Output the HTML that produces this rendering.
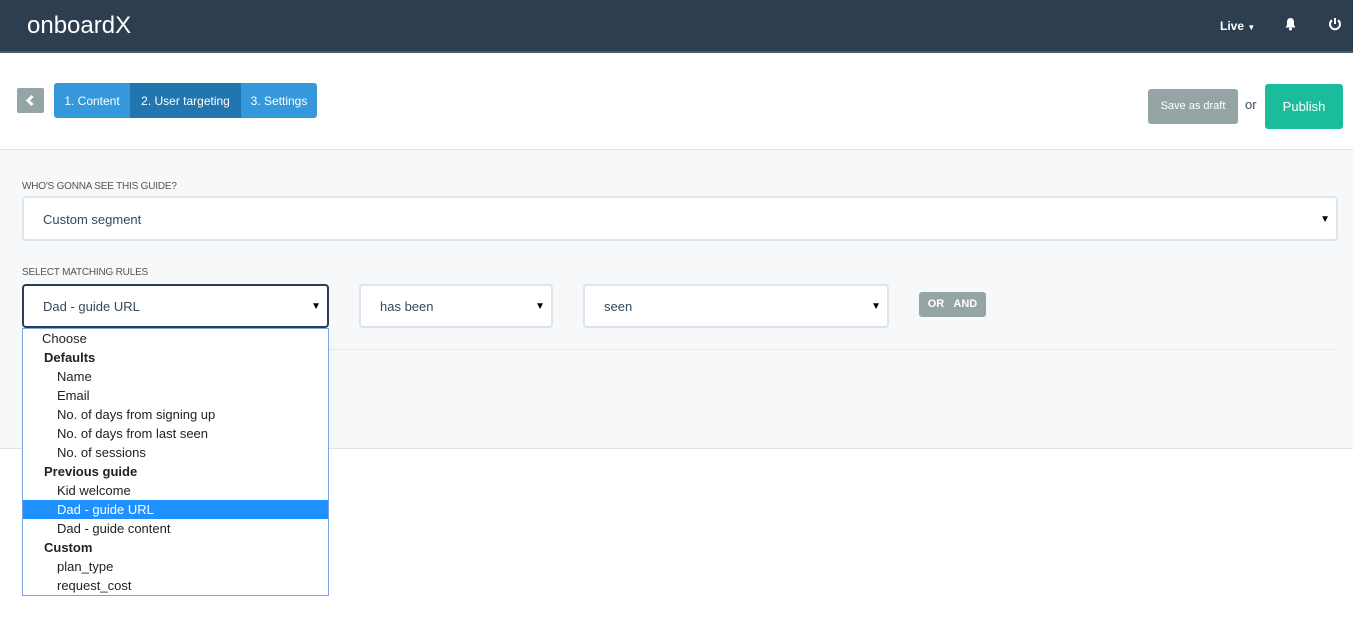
<!DOCTYPE html>
<html><head><meta charset="utf-8"><style>
*{box-sizing:border-box;margin:0;padding:0}
body{width:1353px;height:617px;background:#fff;font-family:"Liberation Sans",sans-serif;position:relative;overflow:hidden;color:#34495e}
.hdr{position:absolute;left:0;top:0;width:1353px;height:53px;background:#2c3e50;border-bottom:2px solid #4a5a6a}
.logo{position:absolute;left:27px;top:12px;color:#fff;font-size:24px}
.abs{position:absolute}
.btn{position:absolute;color:#fff;font-size:12px;text-align:center}
.panel{position:absolute;left:0;top:149px;width:1353px;height:300px;background:#f7f8fa;border-top:1px solid #dfe3e8;border-bottom:1px solid #dfe3e8}
.lbl{position:absolute;font-size:10px;color:#555;letter-spacing:-0.2px}
.sel{position:absolute;background:#fff;border:2px solid #dde4ec;border-radius:4px;font-size:13px;color:#34495e;padding-left:19px}
.arr{position:absolute;right:6px;font-size:10px;color:#000}
.dd{position:absolute;left:22px;top:328px;width:307px;height:268px;background:#fff;border:1px solid #7aa7e0;font-size:13px;color:#222}
.dd div{height:19px;line-height:19px;padding-left:34px}
.dd .g{font-weight:bold;padding-left:21px}
.dd .c{padding-left:19px}
.dd .h{background:#1e90ff;color:#fff}
</style></head><body>
<div class="hdr"><div class="logo">onboardX</div>
<div class="abs" style="left:1220px;top:19px;color:#fff;font-size:12px;font-weight:bold">Live <span style="font-size:8px">▼</span></div>
<svg class="abs" style="left:1284px;top:17px" width="13" height="14" viewBox="0 0 13 14"><path d="M6.5 1C4 1 3 3 3 5v3L1.5 10.5h10L10 8V5c0-2-1-4-3.5-4z" fill="#fff"/><circle cx="6.5" cy="12" r="1.5" fill="#fff"/></svg>
<svg class="abs" style="left:1328px;top:17px" width="14" height="14" viewBox="0 0 14 14"><path d="M4 3.2A5 5 0 1 0 10 3.2" fill="none" stroke="#fff" stroke-width="2"/><path d="M7 1v6" stroke="#fff" stroke-width="2"/></svg>
</div>
<div class="btn" style="left:17px;top:88px;width:27px;height:25px;background:#95a5a6;border-radius:2px"><svg width="27" height="25" viewBox="0 0 27 25"><path d="M15.5 8l-4.5 4.5 4.5 4.5" fill="none" stroke="#fff" stroke-width="3"/></svg></div>
<div class="btn" style="left:54px;top:83px;width:263px;height:35px;background:#3498db;border-radius:3px"></div>
<div class="btn" style="left:130px;top:83px;width:111px;height:35px;background:#2176b0"></div>
<div class="btn" style="left:54px;top:94px;width:76px">1. Content</div>
<div class="btn" style="left:130px;top:94px;width:111px">2. User targeting</div>
<div class="btn" style="left:241px;top:94px;width:76px">3. Settings</div>
<div class="btn" style="left:1148px;top:89px;width:90px;height:35px;background:#95a5a6;border-radius:3px;line-height:35px;font-size:11px">Save as draft</div>
<div class="abs" style="left:1245px;top:97px;font-size:13px">or</div>
<div class="btn" style="left:1265px;top:84px;width:78px;height:45px;background:#1abc9c;border-radius:3px;line-height:45px;font-size:13px">Publish</div>
<div class="panel"></div>
<div class="lbl" style="left:22px;top:181px">WHO'S GONNA SEE THIS GUIDE?</div>
<div class="sel" style="left:22px;top:196px;width:1316px;height:45px;line-height:43px">Custom segment<span class="arr">▼</span></div>
<div class="lbl" style="left:22px;top:267px">SELECT MATCHING RULES</div>
<div class="sel" style="left:22px;top:284px;width:307px;height:44px;line-height:42px;border-color:#2c3e50">Dad - guide URL<span class="arr">▼</span></div>
<div class="sel" style="left:359px;top:284px;width:194px;height:44px;line-height:42px">has been<span class="arr">▼</span></div>
<div class="sel" style="left:583px;top:284px;width:306px;height:44px;line-height:42px">seen<span class="arr">▼</span></div>
<div class="btn" style="left:919px;top:292px;width:67px;height:25px;background:#95a5a6;border-radius:3px;line-height:25px;font-size:11px;font-weight:bold">OR&nbsp;&nbsp;&nbsp;AND</div>
<div class="abs" style="left:22px;top:349px;width:1316px;border-top:1px solid #e6e9ec"></div>
<div class="dd">
<div class="c">Choose</div><div class="g">Defaults</div><div>Name</div><div>Email</div><div>No. of days from signing up</div><div>No. of days from last seen</div><div>No. of sessions</div><div class="g">Previous guide</div><div>Kid welcome</div><div class="h">Dad - guide URL</div><div>Dad - guide content</div><div class="g">Custom</div><div>plan_type</div><div>request_cost</div>
</div>
</body></html>
